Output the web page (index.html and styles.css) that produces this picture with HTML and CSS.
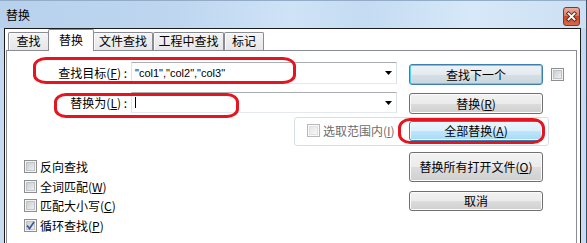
FILE: index.html
```html
<!DOCTYPE html>
<html>
<head>
<meta charset="utf-8">
<title>替换</title>
<link rel="stylesheet" href="styles.css">
</head>
<body>
<div class="window">
  <div class="titlebar">
    <span class="title">替换</span>
    <span class="close">
      <svg width="17" height="19" viewBox="0 0 17 19">
        <defs>
          <linearGradient id="cg" x1="0" y1="0" x2="0" y2="1">
            <stop offset="0" stop-color="#eab3a4"/>
            <stop offset="0.45" stop-color="#d9775f"/>
            <stop offset="0.5" stop-color="#c8482c"/>
            <stop offset="1" stop-color="#d9694a"/>
          </linearGradient>
        </defs>
        <rect x="0.5" y="0.5" width="16" height="18" rx="2.5" fill="url(#cg)" stroke="#7a3a2c"/>
        <path d="M5.5 6.5 L11.5 12.5 M11.5 6.5 L5.5 12.5" stroke="#4a2a22" stroke-width="3.6" stroke-linecap="square"/>
        <path d="M5.5 6.5 L11.5 12.5 M11.5 6.5 L5.5 12.5" stroke="#ffffff" stroke-width="1.8" stroke-linecap="square"/>
      </svg>
    </span>
  </div>
  <div class="frame">
    <div class="client">
      <div class="tabs">
        <div class="tab t1">查找</div>
        <div class="tab active">替换</div>
        <div class="tab t3">文件查找</div>
        <div class="tab t4">工程中查找</div>
        <div class="tab t5">标记</div>
      </div>
      <div class="panel">
        <div class="row r1">
          <span class="lbl">查找目标(<u>F</u>) :</span>
          <div class="combo c1">
            <span class="val">"col1","col2","col3"</span>
            <svg class="arrow" width="7" height="4" viewBox="0 0 7 4"><polygon points="0,0 7,0 3.5,4" fill="#000"/></svg>
          </div>
          <div class="btn btn-focus b1">查找下一个</div>
          <span class="cb cb-right"></span>
        </div>
        <div class="row r2">
          <span class="lbl">替换为(<u>L</u>) :</span>
          <div class="combo c2">
            <span class="caret"></span>
            <svg class="arrow" width="7" height="4" viewBox="0 0 7 4"><polygon points="0,0 7,0 3.5,4" fill="#000"/></svg>
          </div>
          <div class="btn b2">替换(<u>R</u>)</div>
        </div>
        <div class="group">
          <span class="cb disabled g-cb"></span>
          <span class="g-lbl">选取范围内(<u>I</u>)</span>
          <div class="btn btn-hover b3">全部替换(<u>A</u>)</div>
        </div>
        <div class="row4">
          <div class="checks">
            <div class="chk"><span class="cb"></span><span class="chk-lbl">反向查找</span></div>
            <div class="chk"><span class="cb"></span><span class="chk-lbl">全词匹配(<u>W</u>)</span></div>
            <div class="chk"><span class="cb"></span><span class="chk-lbl">匹配大小写(<u>C</u>)</span></div>
            <div class="chk"><span class="cb checked"><svg width="9" height="9" viewBox="0 0 9 9"><path d="M1 4.5 L3.5 7.5 L8 1" fill="none" stroke="#3c5a9c" stroke-width="1.7"/></svg></span><span class="chk-lbl">循环查找(<u>P</u>)</span></div>
          </div>
          <div class="btncol">
            <div class="btn b4">替换所有打开文件(<u>O</u>)</div>
            <div class="btn b5">取消</div>
          </div>
        </div>
      </div>
    </div>
  </div>
  <div class="mark m1"></div>
  <div class="mark m2"></div>
  <div class="mark m3"></div>
</div>
</body>
</html>
```

FILE: styles.css
```css
* { box-sizing: border-box; margin: 0; padding: 0; }
html, body { width: 587px; height: 243px; overflow: hidden; background: #c4d9ef; }
body { font-family: "Noto Sans CJK SC", "Noto Sans", sans-serif; font-size: 12px; color: #000; }

.window {
  position: relative;
  width: 587px; height: 243px;
  display: flex; flex-direction: column;
  border-right: 1px solid #3f5166;
  background: linear-gradient(180deg, #c2d8ef, #c9ddf2);
}
.titlebar {
  height: 28px; flex: none;
  display: flex; align-items: flex-start;
  padding: 0 6px 0 6px;
  border-top: 1px solid #93adc9;
  background: linear-gradient(90deg, #b7d1ec 0%, #bed6f0 30%, #cfe3f7 50%, #c4dbf2 62%, #d6e8f9 80%, #cde0f3 100%);
}
.title { flex: 1; margin-top: 7px; line-height: 14px; font-size: 12px; }
.close { margin-top: 6px; width: 17px; height: 19px; display: block; }
.close svg { display: block; }

.frame { flex: 1; min-height: 0; display: flex; padding: 0 5px 0 4px; }
.client {
  flex: 1; background: #fff;
  border: 1px solid #1c1c1c; border-bottom: none;
  display: flex; flex-direction: column;
}

.tabs { height: 21px; flex: none; display: flex; align-items: flex-end; padding-left: 3px; }
.tab {
  height: 18px; line-height: 16px; text-align: center;
  border: 1px solid #898c95; border-bottom: none;
  border-radius: 2px 2px 0 0;
  background: linear-gradient(#f4f4f4, #e6e6e6);
  box-shadow: inset 1px 1px 0 #fbfbfb;
}
.t1 { width: 41px; }
.active {
  width: 46px; height: 22px; margin-left: -1px; margin-bottom: -1px;
  line-height: 19px;
  background: #fff; box-shadow: none;
  position: relative; z-index: 2;
}
.t3 { width: 60px; margin-left: -1px; }
.t4 { width: 71px; }
.t5 { width: 40px; }

.panel {
  flex: 1; margin: 0 3px 0 1px;
  border: 1px solid #898c95; border-bottom: none;
  display: flex; flex-direction: column;
}

.row { display: flex; align-items: flex-start; }
.r1 { margin-top: 11px; height: 23px; }
.r2 { margin-top: 7px; height: 22px; }
.lbl { width: 121px; height: 22px; line-height: 22px; text-align: right; padding-right: 1px; white-space: nowrap; }
.r2 .lbl { height: 21px; line-height: 21px; }

.combo {
  width: 266px; margin-left: 3px;
  border: 1px solid; border-color: #abadb3 #dbdfe6 #e3e9ef #e2e3ea;
  display: flex; align-items: center;
  padding-left: 3px; padding-right: 4px;
}
.c1 { height: 22px; }
.c2 { height: 21px; }
.val { font-family: "Liberation Sans", Arial, sans-serif; font-size: 11px; flex: 1; }
.caret { width: 1px; height: 11px; background: #000; }
.arrow { margin-left: auto; display: block; }

.btn {
  width: 134px; height: 21px;
  border: 1px solid #707070; border-radius: 3px;
  background: linear-gradient(#f2f2f2 0%, #ebebeb 50%, #dddddd 50%, #cfcfcf 100%);
  box-shadow: inset 0 0 0 1px #fbfbfb;
  display: flex; align-items: center; justify-content: center;
  line-height: 14px; white-space: nowrap;
}
.btn-focus {
  border-color: #3c7fb1;
  background: linear-gradient(#eef3f6 0%, #e3eaef 50%, #d5dfe6 50%, #c9d6de 100%);
  box-shadow: inset 0 0 0 1px #4fd3fa;
}
.btn-hover {
  border-color: #3c7fb1;
  background: linear-gradient(#eaf6fd 0%, #d9f0fc 50%, #bee6fd 50%, #a7d9f5 100%);
  box-shadow: inset 0 0 0 1px #f2fafe;
}
.b1 { margin-left: 12px; margin-top: 2px; }
.b2 { margin-left: 12px; margin-top: 1px; }

.cb {
  width: 13px; height: 13px; flex: none;
  border: 1px solid #8e8f8f;
  background: #f4f4f4;
  padding: 1px;
  display: block;
}
.cb::before {
  content: ""; display: block; width: 9px; height: 9px;
  background: linear-gradient(135deg, #c6c9cd, #f3f3f3);
  box-shadow: inset 0 0 0 1px #bfc3c8;
}
.cb.checked { position: relative; }
.cb.checked svg { position: absolute; left: 1px; top: 1px; }
.cb.disabled { border-color: #b8b8b8; background: #fafafa; }
.cb.disabled::before { background: linear-gradient(135deg, #e3e3e3, #fbfbfb); box-shadow: inset 0 0 0 1px #e0e0e0; }
.cb-right { margin-left: 8px; margin-top: 6px; }

.group {
  margin: 3px 0 0 287px; width: 255px; height: 29px;
  border: 1px solid #d5dfe5; border-radius: 3px;
  display: flex; align-items: flex-start;
  padding-left: 12px;
}
.g-cb { margin-top: 6px; }
.g-lbl { margin-top: 6px; margin-left: 3px; line-height: 13px; color: #6d6d6d; white-space: nowrap; }
.b3 { margin-left: auto; margin-right: 5px; margin-top: 3px; height: 20px; }

.row4 { display: flex; align-items: flex-start; }
.checks { width: 402px; padding: 14px 0 0 17px; display: flex; flex-direction: column; gap: 6.6px; }
.chk { display: flex; align-items: center; height: 13px; }
.chk-lbl { margin-left: 3px; line-height: 13px; white-space: nowrap; }
.btncol { width: 134px; padding-top: 6px; display: flex; flex-direction: column; }
.b4 { height: 30px; }
.b5 { height: 20px; margin-top: 9px; }

.mark {
  position: absolute;
  border: 3px solid #e5141e;
  pointer-events: none;
}
.m1 { left: 33px; top: 57px; width: 263px; height: 27px; border-radius: 13px / 9px; }
.m2 { left: 54px; top: 93px; width: 185px; height: 25px; border-radius: 12px / 9px; }
.m3 { left: 398px; top: 118px; width: 147px; height: 26px; border-radius: 12px / 10px; }
```
